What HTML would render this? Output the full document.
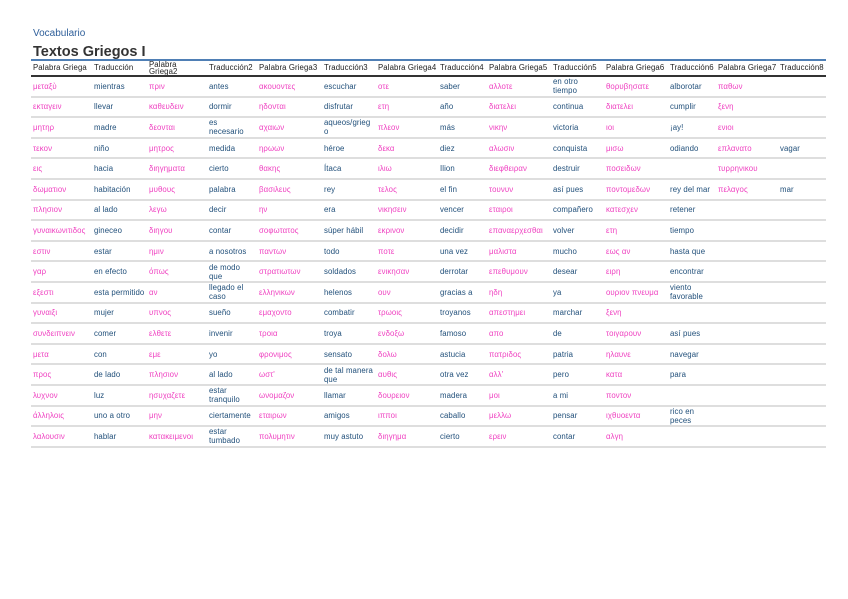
<!DOCTYPE html>
<html><head><meta charset="utf-8"><style>
html,body{margin:0;padding:0;background:#fff;width:848px;height:599px;overflow:hidden}
body{font-family:"Liberation Sans",sans-serif;position:relative}
.sub{position:absolute;left:33px;top:28px;font-size:10px;color:#2f5f9a}
.title{position:absolute;left:33px;top:44px;font-size:14.5px;font-weight:bold;color:#333}
.rule{position:absolute;left:31px;top:59px;width:795px;height:2px;background:#4f7fb5}
table{position:absolute;left:31px;top:61px;width:795px;border-collapse:collapse;table-layout:fixed}
td,th{font-size:7.8px;line-height:9px;padding:0 0 0 2px;text-align:left;vertical-align:middle;overflow:hidden;white-space:nowrap;letter-spacing:0.1px}
th{font-weight:normal;color:#222;height:14px;max-height:14px;border-bottom:2px solid #333}
th div{height:14px;overflow:hidden;line-height:14px}
th div.two{line-height:7px}
td{height:18.6px;border-bottom:2px solid #dedede;color:#1f4e79}
td.g{color:#ef3fc0}
</style></head><body>
<div class="sub">Vocabulario</div>
<div class="title">Textos Griegos I</div>
<div class="rule"></div>
<table>
<colgroup><col style="width:61px"><col style="width:55px"><col style="width:60px"><col style="width:50px"><col style="width:65px"><col style="width:54px"><col style="width:62px"><col style="width:49px"><col style="width:64px"><col style="width:53px"><col style="width:64px"><col style="width:48px"><col style="width:62px"><col style="width:48px"></colgroup>
<tr><th><div>Palabra Griega</div></th><th><div>Traducción</div></th><th><div class="two">Palabra<br>Griega2</div></th><th><div>Traducción2</div></th><th><div>Palabra Griega3</div></th><th><div>Traducción3</div></th><th><div>Palabra Griega4</div></th><th><div>Traducción4</div></th><th><div>Palabra Griega5</div></th><th><div>Traducción5</div></th><th><div>Palabra Griega6</div></th><th><div>Traducción6</div></th><th><div>Palabra Griega7</div></th><th><div>Traducción8</div></th></tr>
<tr><td class="g">μεταξὺ</td><td>mientras</td><td class="g">πριν</td><td>antes</td><td class="g">ακουοντες</td><td>escuchar</td><td class="g">οτε</td><td>saber</td><td class="g">αλλοτε</td><td>en otro<br>tiempo</td><td class="g">θορυβησατε</td><td>alborotar</td><td class="g">παθων</td><td></td></tr>
<tr><td class="g">εκταγειν</td><td>llevar</td><td class="g">καθευδειν</td><td>dormir</td><td class="g">ηδονται</td><td>disfrutar</td><td class="g">ετη</td><td>año</td><td class="g">διατελει</td><td>continua</td><td class="g">διατελει</td><td>cumplir</td><td class="g">ξενη</td><td></td></tr>
<tr><td class="g">μητηρ</td><td>madre</td><td class="g">δεονται</td><td>es<br>necesario</td><td class="g">αχαιων</td><td>aqueos/grieg<br>o</td><td class="g">πλεον</td><td>más</td><td class="g">νικην</td><td>victoria</td><td class="g">ιοι</td><td>¡ay!</td><td class="g">ενιοι</td><td></td></tr>
<tr><td class="g">τεκον</td><td>niño</td><td class="g">μητρος</td><td>medida</td><td class="g">ηρωων</td><td>héroe</td><td class="g">δεκα</td><td>diez</td><td class="g">αλωσιν</td><td>conquista</td><td class="g">μισω</td><td>odiando</td><td class="g">επλανατο</td><td>vagar</td></tr>
<tr><td class="g">εις</td><td>hacia</td><td class="g">διηγηματα</td><td>cierto</td><td class="g">θακης</td><td>Ítaca</td><td class="g">ιλιω</td><td>Ilion</td><td class="g">διεφθειραν</td><td>destruir</td><td class="g">ποσειδων</td><td></td><td class="g">τυρρηνικου</td><td></td></tr>
<tr><td class="g">δωματιον</td><td>habitación</td><td class="g">μυθους</td><td>palabra</td><td class="g">βασιλευς</td><td>rey</td><td class="g">τελος</td><td>el fin</td><td class="g">τουνυν</td><td>así pues</td><td class="g">ποντομεδων</td><td>rey del mar</td><td class="g">πελαγος</td><td>mar</td></tr>
<tr><td class="g">πλησιον</td><td>al lado</td><td class="g">λεγω</td><td>decir</td><td class="g">ην</td><td>era</td><td class="g">νικησειν</td><td>vencer</td><td class="g">εταιροι</td><td>compañero</td><td class="g">κατεσχεν</td><td>retener</td><td></td><td></td></tr>
<tr><td class="g">γυναικωνιτιδος</td><td>gineceo</td><td class="g">διηγου</td><td>contar</td><td class="g">σοφωτατος</td><td>súper hábil</td><td class="g">εκρινον</td><td>decidir</td><td class="g">επαναερχεσθαι</td><td>volver</td><td class="g">ετη</td><td>tiempo</td><td></td><td></td></tr>
<tr><td class="g">εστιν</td><td>estar</td><td class="g">ημιν</td><td>a nosotros</td><td class="g">παντων</td><td>todo</td><td class="g">ποτε</td><td>una vez</td><td class="g">μαλιστα</td><td>mucho</td><td class="g">εως αν</td><td>hasta que</td><td></td><td></td></tr>
<tr><td class="g">γαρ</td><td>en efecto</td><td class="g">όπως</td><td>de modo<br>que</td><td class="g">στρατιωτων</td><td>soldados</td><td class="g">ενικησαν</td><td>derrotar</td><td class="g">επεθυμουν</td><td>desear</td><td class="g">ειρη</td><td>encontrar</td><td></td><td></td></tr>
<tr><td class="g">εξεστι</td><td>esta permitido</td><td class="g">αν</td><td>llegado el<br>caso</td><td class="g">ελληνικων</td><td>helenos</td><td class="g">ουν</td><td>gracias a</td><td class="g">ηδη</td><td>ya</td><td class="g">ουριον πνευμα</td><td>viento<br>favorable</td><td></td><td></td></tr>
<tr><td class="g">γυναιξι</td><td>mujer</td><td class="g">υπνος</td><td>sueño</td><td class="g">εμαχοντο</td><td>combatir</td><td class="g">τρωοις</td><td>troyanos</td><td class="g">απεστημει</td><td>marchar</td><td class="g">ξενη</td><td></td><td></td><td></td></tr>
<tr><td class="g">συνδειπνειν</td><td>comer</td><td class="g">ελθετε</td><td>invenir</td><td class="g">τροια</td><td>troya</td><td class="g">ενδοξω</td><td>famoso</td><td class="g">απο</td><td>de</td><td class="g">τοιγαρουν</td><td>así pues</td><td></td><td></td></tr>
<tr><td class="g">μετα</td><td>con</td><td class="g">εμε</td><td>yo</td><td class="g">φρονιμος</td><td>sensato</td><td class="g">δολω</td><td>astucia</td><td class="g">πατριδος</td><td>patria</td><td class="g">ηλαυνε</td><td>navegar</td><td></td><td></td></tr>
<tr><td class="g">προς</td><td>de lado</td><td class="g">πλησιον</td><td>al lado</td><td class="g">ωστ'</td><td>de tal manera<br>que</td><td class="g">αυθις</td><td>otra vez</td><td class="g">αλλ'</td><td>pero</td><td class="g">κατα</td><td>para</td><td></td><td></td></tr>
<tr><td class="g">λυχνον</td><td>luz</td><td class="g">ησυχαζετε</td><td>estar<br>tranquilo</td><td class="g">ωνομαζον</td><td>llamar</td><td class="g">δουρειον</td><td>madera</td><td class="g">μοι</td><td>a mi</td><td class="g">ποντον</td><td></td><td></td><td></td></tr>
<tr><td class="g">άλληλοις</td><td>uno a otro</td><td class="g">μην</td><td>ciertamente</td><td class="g">εταιρων</td><td>amigos</td><td class="g">ιπποι</td><td>caballo</td><td class="g">μελλω</td><td>pensar</td><td class="g">ιχθυοεντα</td><td>rico en<br>peces</td><td></td><td></td></tr>
<tr><td class="g">λαλουσιν</td><td>hablar</td><td class="g">κατακειμενοι</td><td>estar<br>tumbado</td><td class="g">πολυμητιν</td><td>muy astuto</td><td class="g">διηγημα</td><td>cierto</td><td class="g">ερειν</td><td>contar</td><td class="g">αλγη</td><td></td><td></td><td></td></tr>
</table>
</body></html>
